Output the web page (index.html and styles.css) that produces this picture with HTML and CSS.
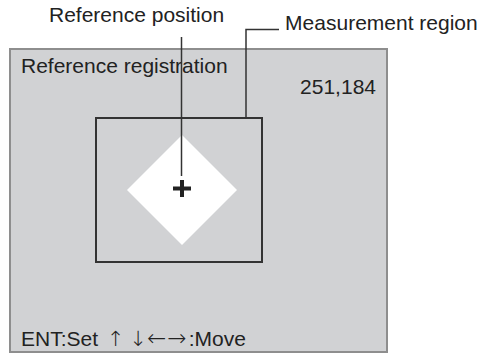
FILE: index.html
```html
<!DOCTYPE html>
<html>
<head>
<meta charset="utf-8">
<link rel="stylesheet" href="styles.css">
</head>
<body>
<div class="page">
  <div class="callouts">
    <span class="label label-ref">Reference position</span>
    <span class="label label-meas">Measurement region</span>
  </div>
  <div class="panel">
    <div class="title">Reference registration</div>
    <div class="coords">251,184</div>
    <div class="region">
      <svg class="target" width="110" height="110" viewBox="0 0 110 110">
        <polygon points="55,0 110,55 55,110 0,55" fill="#fff"/>
        <rect x="46" y="51.5" width="18" height="4" fill="#222"/>
        <rect x="53" y="45" width="4" height="17" fill="#222"/>
      </svg>
    </div>
    <div class="footer">ENT:Set <span class="arrow arrow-up">↑</span><span class="arrow arrow-down">↓</span><span class="arrow arrow-lr">←→</span>:Move</div>
  </div>
  <svg class="leaders" width="485" height="355" viewBox="0 0 485 355">
    <line x1="181.5" y1="37" x2="181.5" y2="176" stroke="#333" stroke-width="1.5"/>
    <polyline points="279,29.5 246,29.5 246,117" fill="none" stroke="#333" stroke-width="1.5"/>
  </svg>
</div>
</body>
</html>
```
FILE: styles.css
```css
html, body {
  margin: 0;
  padding: 0;
  background: #fff;
}
body {
  font-family: "Liberation Sans", Arial, sans-serif;
  color: #222;
}
.page {
  position: relative;
  width: 485px;
  height: 355px;
}
.callouts {
  display: flex;
  align-items: flex-start;
  height: 48px;
}
.label {
  font-size: 21px;
  line-height: 21px;
  white-space: nowrap;
}
.label-ref {
  margin-top: 4px;
  margin-left: 49px;
}
.label-meas {
  margin-top: 12px;
  margin-left: 61px;
}
.panel {
  box-sizing: border-box;
  margin-left: 9px;
  width: 379px;
  height: 305px;
  border: 2px solid #8e8e8e;
  background: #d1d2d4;
  display: flex;
  flex-direction: column;
  padding: 5px 10px 1px 10px;
  font-size: 21px;
  line-height: 21px;
}
.title {
  white-space: nowrap;
}
.coords {
  align-self: flex-end;
}
.region {
  box-sizing: border-box;
  margin-top: 20px;
  margin-left: 74px;
  width: 168px;
  height: 146px;
  border: 2px solid #333;
  display: flex;
  justify-content: center;
  align-items: center;
  padding-left: 6px;
}
.target {
  display: block;
}
.footer {
  margin-top: auto;
  white-space: nowrap;
}
.arrow {
  font-family: "DejaVu Sans", sans-serif;
  font-size: 21px;
  font-weight: 200;
}
.arrow-up {
  margin-left: 3px;
}
.arrow-down {
  margin-left: 5px;
}
.arrow-lr {
  font-size: 23px;
  letter-spacing: 1px;
  margin-left: 0;
  margin-right: 1px;
}
.leaders {
  position: absolute;
  left: 0;
  top: 0;
  pointer-events: none;
}
```
